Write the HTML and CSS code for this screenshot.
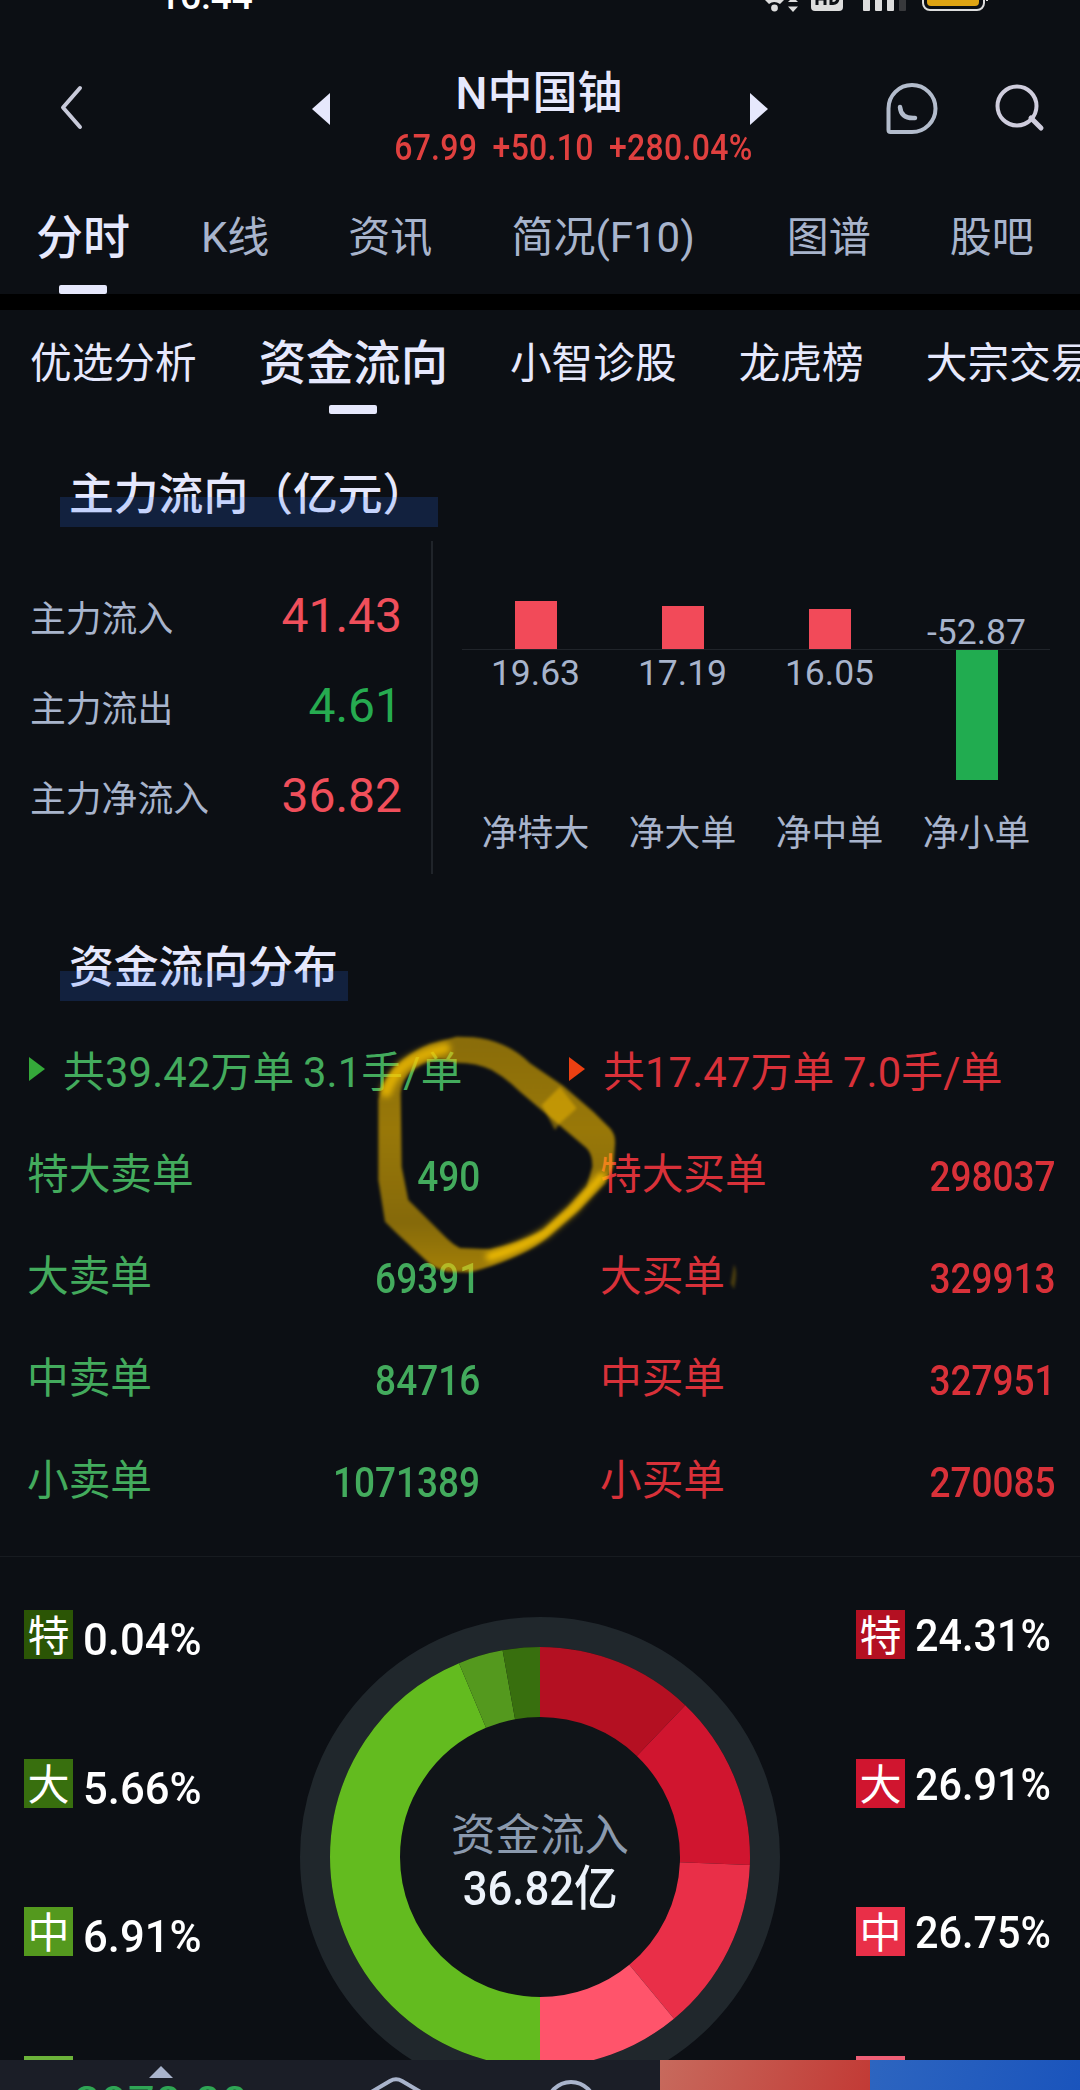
FILE: index.html
```html
<!DOCTYPE html>
<html lang="zh-CN">
<head>
    <meta charset="UTF-8">
    <meta name="viewport" content="width=device-width, initial-scale=1.0">
    <title>N中国铀 - 资金流向</title>
    <link rel="stylesheet" href="styles.css">
</head>
<body>
    <div class="app">
        <div class="status-bar">
            <span class="clock">16:44</span>
            <svg class="status-icons" width="230" height="14" viewBox="0 0 230 14">
                <path d="M5 0 Q14 -6 24 0 L20 4 Q14 0 9 4 Z" fill="#ddd"/>
                <circle cx="14.5" cy="8" r="3.4" fill="#ddd"/>
                <path d="M28 2 h10 L33 -3 Z M28 6.500 h10 L33 12 Z" fill="#ddd"/>
                <rect x="51" y="-16" width="32" height="27" rx="4" fill="#ddd"/>
                <path d="M57 -8 V5 M65 -8 V5 M57 -1 H65 M71 -8 V3.500 H73 Q78 3 78 -2" stroke="#0c0f14" stroke-width="3" fill="none"/>
                <rect x="103" y="-10" width="7" height="21" rx="1" fill="#ddd"/>
                <rect x="115" y="-10" width="7" height="21" rx="1" fill="#ddd"/>
                <rect x="127" y="-10" width="7" height="21" rx="1" fill="#ddd"/>
                <rect x="139" y="-10" width="7" height="21" rx="1" fill="#38393c"/>
                <rect x="163" y="-20" width="61" height="30" rx="7" fill="none" stroke="#ddd" stroke-width="2"/>
                <rect x="167" y="-16" width="52" height="22" rx="4" fill="#dfa413"/>
                <rect x="226" y="-4" width="2" height="5" fill="#ddd"/>
            </svg>
        </div>

        <header class="header">
            <svg class="back" width="24" height="46" viewBox="0 0 24 46">
                <path d="M20 3 L3 22.500 L20 42" fill="none" stroke="#c8cada" stroke-width="4" stroke-linecap="round" stroke-linejoin="round"/>
            </svg>
            <span class="tri tri-left"></span>
            <div class="stock">
                <div class="stock-name">N中国铀</div>
                <div class="stock-quote"><span class="squeeze">67.99 +50.10 +280.04%</span></div>
            </div>
            <span class="tri tri-right"></span>
            <svg class="chat" width="54" height="54" viewBox="0 0 54 54">
                <path d="M27 3 A23.500 23.500 0 1 1 27 50 H5.500 Q3.500 50 3.500 48 V26.500 A23.500 23.500 0 0 1 27 3 Z" fill="none" stroke="#b3bccc" stroke-width="4"/>
                <path d="M15 25 Q16 37 30 36" fill="none" stroke="#b3bccc" stroke-width="4.500" stroke-linecap="round"/>
            </svg>
            <svg class="search" width="52" height="50" viewBox="0 0 52 50">
                <circle cx="23" cy="23" r="19.500" fill="none" stroke="#cfcddd" stroke-width="4"/>
                <path d="M37 35 L47 45" stroke="#cfcddd" stroke-width="5" stroke-linecap="round"/>
            </svg>
        </header>

        <nav class="tabs">
            <span class="tab active">分时</span>
            <span class="tab">K线</span>
            <span class="tab">资讯</span>
            <span class="tab tab-wide">简况(F10)</span>
            <span class="tab">图谱</span>
            <span class="tab">股吧</span>
        </nav>

        <nav class="subtabs">
            <span class="subtab">优选分析</span>
            <span class="subtab active">资金流向</span>
            <span class="subtab">小智诊股</span>
            <span class="subtab">龙虎榜</span>
            <span class="subtab">大宗交易</span>
        </nav>

        <section class="main-flow">
            <h2 class="title title-main">主力流向（亿元）</h2>
            <div class="flow">
                <div class="flow-list">
                    <div class="flow-row"><span>主力流入</span><b class="up">41.43</b></div>
                    <div class="flow-row"><span>主力流出</span><b class="down">4.61</b></div>
                    <div class="flow-row"><span>主力净流入</span><b class="up">36.82</b></div>
                </div>
                <div class="chart">
                    <div class="col">
                        <div class="above"><i class="bar bar-up" style="height:48px"></i></div>
                        <div class="below"><span class="val">19.63</span></div>
                        <span class="name">净特大</span>
                    </div>
                    <div class="col">
                        <div class="above"><i class="bar bar-up" style="height:43px"></i></div>
                        <div class="below"><span class="val">17.19</span></div>
                        <span class="name">净大单</span>
                    </div>
                    <div class="col">
                        <div class="above"><i class="bar bar-up" style="height:40px"></i></div>
                        <div class="below"><span class="val">16.05</span></div>
                        <span class="name">净中单</span>
                    </div>
                    <div class="col">
                        <div class="above"><span class="val">-52.87</span></div>
                        <div class="below"><i class="bar bar-down" style="height:130px"></i></div>
                        <span class="name">净小单</span>
                    </div>
                </div>
            </div>
        </section>

        <section class="distribution">
            <h2 class="title title-dist">资金流向分布</h2>
            <div class="orders">
                <div class="sell">
                    <div class="summary"><i class="mark"></i>共39.42万单 3.1手/单</div>
                    <div class="order"><span>特大卖单</span><b class="squeeze">490</b></div>
                    <div class="order"><span>大卖单</span><b class="squeeze">69391</b></div>
                    <div class="order"><span>中卖单</span><b class="squeeze">84716</b></div>
                    <div class="order"><span>小卖单</span><b class="squeeze">1071389</b></div>
                </div>
                <div class="buy">
                    <div class="summary"><i class="mark"></i>共17.47万单 7.0手/单</div>
                    <div class="order"><span>特大买单</span><b class="squeeze">298037</b></div>
                    <div class="order"><span>大买单</span><b class="squeeze">329913</b></div>
                    <div class="order"><span>中买单</span><b class="squeeze">327951</b></div>
                    <div class="order"><span>小买单</span><b class="squeeze">270085</b></div>
                </div>
            </div>
            <!-- hand-drawn marker circle -->
            <svg class="marker" width="380" height="270" viewBox="0 0 1140 810">
                <defs>
                    <filter id="soft"><feGaussianBlur stdDeviation="4"/></filter>
                    <filter id="softer" x="-20%" y="-20%" width="140%" height="140%"><feGaussianBlur stdDeviation="9"/></filter>
                    <linearGradient id="ink" gradientUnits="userSpaceOnUse" x1="0" y1="0" x2="0" y2="810">
                        <stop offset="0.1" stop-color="#ffc400" stop-opacity="0.52"/>
                        <stop offset="0.4" stop-color="#ffc400" stop-opacity="0.58"/>
                        <stop offset="0.75" stop-color="#ffc400" stop-opacity="0.5"/>
                        <stop offset="0.9" stop-color="#ffc400" stop-opacity="0.6"/>
                    </linearGradient>
                </defs>
                <g filter="url(#soft)">
                    <path fill="url(#ink)" fill-rule="evenodd" d="M290 50 L340 52 Q385 56 430 75 Q475 95 510 130 L610 198 L700 275 L750 325 Q768 345 765 375 L760 440 L735 490 L660 567 L570 645 Q530 680 480 703 Q400 740 330 757 L260 755 Q225 745 210 733 L110 640 L75 605 L55 480 L55 240 Q65 190 100 145 Q150 95 210 72 Z M290 128 Q350 128 395 150 Q440 175 480 215 L580 300 L680 385 Q698 405 697 440 L680 500 L620 565 L550 630 Q490 665 390 688 L300 684 Q280 675 260 655 L145 540 L125 440 L122 220 Q125 175 165 145 Q200 120 240 118 Z"/>
                    <path d="M600 200 L650 265 L600 310 L585 330 L545 255 Z" fill="#ffc400" fill-opacity="0.42"/>
                    <path d="M1122 733 Q1135 757 1122 808 L1112 790 Z" fill="#ffc400" fill-opacity="0.25"/>
                </g>
                <g filter="url(#softer)" fill="none" stroke="#ffc800" stroke-linecap="round">
                    <path d="M78 215 Q95 170 130 138 Q175 105 255 85" stroke-width="34" stroke-opacity="0.7"/>
                    <path d="M725 470 Q690 510 640 567 L555 640 Q480 685 390 710" stroke-width="26" stroke-opacity="0.85"/>
                </g>
            </svg>
        </section>

        <section class="share">
            <div class="legend legend-sell">
                <div class="item"><i class="s1">特</i><span>0.04%</span></div>
                <div class="item"><i class="s2">大</i><span>5.66%</span></div>
                <div class="item"><i class="s3">中</i><span>6.91%</span></div>
                <div class="item"><i class="s4"></i></div>
            </div>
            <div class="donut">
                <svg width="480" height="480" viewBox="0 0 480 480">
                    <circle cx="240" cy="240" r="225" fill="#101418" stroke="#20272c" stroke-width="30"/>
                    <!-- each half of the ring adds up to 100 -->
                    <g fill="none" stroke-width="70" transform="rotate(-90 240 240)">
                        <circle cx="240" cy="240" r="175" pathLength="200" stroke="#b41022" stroke-dasharray="24.31 200"/>
                        <circle cx="240" cy="240" r="175" pathLength="200" stroke="#d0152f" stroke-dasharray="26.91 200" stroke-dashoffset="-24.31"/>
                        <circle cx="240" cy="240" r="175" pathLength="200" stroke="#e92f48" stroke-dasharray="26.75 200" stroke-dashoffset="-51.22"/>
                        <circle cx="240" cy="240" r="175" pathLength="200" stroke="#ff546b" stroke-dasharray="22.03 200" stroke-dashoffset="-77.97"/>
                        <circle cx="240" cy="240" r="175" pathLength="200" stroke="#63bb1f" stroke-dasharray="87.39 200" stroke-dashoffset="-100"/>
                        <circle cx="240" cy="240" r="175" pathLength="200" stroke="#54991e" stroke-dasharray="6.91 200" stroke-dashoffset="-187.39"/>
                        <circle cx="240" cy="240" r="175" pathLength="200" stroke="#386f0e" stroke-dasharray="5.7 200" stroke-dashoffset="-194.3"/>
                    </g>
                </svg>
                <div class="donut-text">
                    <div class="donut-label">资金流入</div>
                    <div class="donut-value"><span class="squeeze">36.82亿</span></div>
                </div>
            </div>
            <div class="legend legend-buy">
                <div class="item"><i class="b1">特</i><span>24.31%</span></div>
                <div class="item"><i class="b2">大</i><span>26.91%</span></div>
                <div class="item"><i class="b3">中</i><span>26.75%</span></div>
                <div class="item"><i class="b4"></i></div>
            </div>
        </section>

        <footer class="bottom-bar">
            <div class="index"><i class="tri-up"></i><span>3970.00</span></div>
            <div class="tool">
                <svg width="60" height="30" viewBox="0 0 60 30">
                    <path d="M2 34 L24 21 Q30 17.500 36 21 L58 34" fill="none" stroke="#a9b4cc" stroke-width="4"/>
                </svg>
            </div>
            <div class="tool">
                <svg width="60" height="30" viewBox="0 0 60 30">
                    <circle cx="29" cy="46" r="24" fill="none" stroke="#a9b4cc" stroke-width="4"/>
                </svg>
            </div>
            <div class="btn btn-buy"></div>
            <div class="btn btn-sell"></div>
        </footer>
    </div>
</body>
</html>
```

FILE: styles.css
```css
* {
    box-sizing: border-box;
}
body {
    margin: 0;
    background-color: #0c0f14;
    color: #e6e8fc;
    font-family: Roboto, "Noto Sans CJK SC", sans-serif;
    font-size: 42px;
}
.app {
    width: 1080px;
    height: 2090px;
    overflow: hidden;
    display: flex;
    flex-direction: column;
}
.app > * {
    flex: none;
}
i, b {
    font-style: normal;
    font-weight: 400;
}
.squeeze {
    display: inline-block;
    transform: scaleX(0.86);
}

/* status bar */
.status-bar {
    height: 14px;
    padding: 0 90px 0 159px;
    display: flex;
    justify-content: space-between;
    overflow: hidden;
    color: #fff;
}
.clock {
    font-size: 37px;
    font-weight: 500;
    line-height: 40px;
    margin-top: -23px;
}

/* header */
.header {
    height: 178px;
    display: flex;
    padding-left: 60px;
}
.back {
    margin-top: 71px;
}
.tri {
    width: 0;
    height: 0;
    margin-top: 79px;
    border-top: 16px solid transparent;
    border-bottom: 16px solid transparent;
}
.tri-left {
    margin-left: 228px;
    border-right: 18px solid #e6e8fc;
}
.tri-right {
    border-left: 18px solid #e6e8fc;
}
.stock {
    width: 420px;
    text-align: center;
    padding-top: 53px;
    white-space: nowrap;
}
.stock-name {
    font-size: 45px;
    font-weight: 500;
    line-height: 54px;
    padding-right: 2px;
}
.stock-quote {
    font-size: 36px;
    line-height: 40px;
    margin-top: 7px;
    padding-left: 66px;
    color: #e0403f;
    font-weight: 500;
}
.stock-quote .squeeze {
    margin: 0 -40px;
    word-spacing: 8px;
    letter-spacing: 0.3px;
    transform: scaleX(0.89);
}
.chat {
    margin: 68px 0 0 117px;
}
.search {
    margin: 69px 0 0 55px;
}

/* top tabs */
.tabs {
    height: 118px;
    display: flex;
    padding: 14px 0 0 36px;
    border-bottom: 16px solid #000;
    line-height: 64px;
    color: #a8b4cc;
    white-space: nowrap;
}
.tab {
    margin-right: 79px;
}
.tab-wide {
    margin-right: 92px;
}
.tab.active {
    width: 96px;
    margin-right: 71px;
    font-size: 47px;
    font-weight: 500;
    color: #e6e8fc;
}
.tab.active::after,
.subtab.active::after {
    content: "";
    display: block;
    width: 48px;
    height: 9px;
    margin: 15px auto 0;
    border-radius: 2px;
    background-color: #e6e8fc;
}

/* second level tabs */
.subtabs {
    height: 118px;
    display: flex;
    padding: 22px 0 0 30px;
    line-height: 64px;
    font-size: 41.7px;
    white-space: nowrap;
}
.subtab {
    margin-right: 62px;
}
.subtab.active {
    font-size: 47.3px;
    font-weight: 500;
}
.subtab.active::after {
    margin-top: 9px;
}

/* section titles with the blue underlay */
.title {
    position: relative;
    margin: 0 0 0 60px;
    padding-left: 9px;
    font-size: 44.8px;
    font-weight: 500;
    line-height: 60px;
    white-space: nowrap;
}
.title::after {
    content: "";
    position: absolute;
    left: 0;
    bottom: 0;
    width: 100%;
    height: 30px;
    background-color: rgba(50, 115, 255, 0.18);
}
.title-main {
    width: 378px;
    padding-bottom: 4px;
    line-height: 56px;
}
.title-dist {
    width: 288px;
    padding-bottom: 3px;
}

/* main flow */
.main-flow {
    height: 510px;
    padding-top: 39px;
}
.flow {
    display: flex;
    margin-top: 14px;
}
.flow-list {
    width: 433px;
    height: 333px;
    padding: 34px 29px 0 30px;
    border-right: 2px solid #20242a;
}
.flow-row {
    height: 90px;
    display: flex;
    justify-content: space-between;
    line-height: 90px;
    font-size: 35.8px;
    color: #a8b4cc;
}
.flow-row b {
    font-size: 48px;
    line-height: 81px;
}
.flow-row .up {
    color: #f04f5b;
}
.flow-row .down {
    color: #26ab50;
}
.chart {
    width: 588px;
    margin-left: 29px;
    display: flex;
    color: #a8b4cc;
}
.col {
    width: 147px;
    text-align: center;
}
.above {
    height: 109px;
    display: flex;
    align-items: flex-end;
    justify-content: center;
    border-bottom: 1px solid #20242a;
}
.below {
    height: 158px;
    display: flex;
    align-items: flex-start;
    justify-content: center;
}
.bar {
    width: 42px;
}
.bar-up {
    background-color: #f24a59;
}
.bar-down {
    background-color: #21ac50;
}
.val {
    font-size: 35.5px;
    line-height: 34px;
    padding-top: 6px;
}
.above .val {
    padding: 0;
}
.name {
    display: block;
    font-size: 35.8px;
    line-height: 52px;
}

/* distribution */
.distribution {
    position: relative;
    height: 619px;
    border-bottom: 1px solid #171b20;
}
.orders {
    display: flex;
    margin-top: 31px;
}
.sell, .buy {
    width: 540px;
    font-size: 41.7px;
    white-space: nowrap;
}
.sell {
    color: #43ab5d;
    padding: 0 60px 0 27px;
}
.buy {
    color: #d93139;
    padding: 0 24px 0 60px;
}
.summary {
    display: flex;
    align-items: center;
    height: 74px;
    letter-spacing: 0.2px;
    word-spacing: -2px;
}
.buy .summary {
    margin-left: -33px;
}
.mark {
    margin: 0 18px 0 2px;
    border-left: 16px solid #35a93a;
    border-top: 12px solid transparent;
    border-bottom: 12px solid transparent;
}
.buy .mark {
    border-left-color: #ec4012;
}
.order {
    height: 102px;
    display: flex;
    justify-content: space-between;
    align-items: center;
}
.order:nth-child(2) {
    margin-top: 14px;
}
.order b {
    font-size: 43px;
    font-weight: 500;
    padding-top: 10px;
    transform-origin: right;
}
.marker {
    position: absolute;
    left: 360px;
    top: 82px;
}

/* share of orders */
.share {
    height: 503px;
    display: flex;
    overflow: hidden;
    color: #fff;
}
.legend {
    width: 300px;
    padding: 53px 0 0 24px;
}
.legend-buy {
    padding-left: 76px;
}
.item {
    height: 148.6px;
    display: flex;
    align-items: flex-start;
    line-height: 60px;
    font-size: 45px;
    font-weight: 500;
}
.item i {
    width: 49px;
    height: 49px;
    margin-right: 10px;
    text-align: center;
    font-size: 42px;
    line-height: 54px;
}
.item span {
    transform: scaleX(0.97);
    transform-origin: left;
}
.legend-buy .item {
    font-size: 43.5px;
    line-height: 54px;
}
.legend-buy .item span {
    transform: scaleX(0.95);
}
.s1 { background-color: #2b5505; }
.s2 { background-color: #386f0e; }
.s3 { background-color: #54991e; }
.s4 { background-color: #6cb33a; }
.b1 { background-color: #b41022; }
.b2 { background-color: #d0152f; }
.b3 { background-color: #e92f48; }
.b4 { background-color: #ef5f76; }
.donut {
    position: relative;
    width: 480px;
    padding-top: 60px;
}
.donut-text {
    position: absolute;
    left: 0;
    top: 250px;
    width: 100%;
    text-align: center;
}
.donut-label {
    font-size: 44.5px;
    line-height: 58px;
    color: #8b9aae;
}
.donut-value {
    font-size: 48px;
    font-weight: 500;
    line-height: 48px;
    color: #edf3fb;
}
.donut-value .squeeze {
    transform: scaleX(0.91);
}

/* bottom bar */
.bottom-bar {
    height: 30px;
    display: flex;
    overflow: hidden;
    background-color: #1b1e27;
}
.index {
    width: 308px;
    padding-left: 14px;
    display: flex;
    flex-direction: column;
    align-items: center;
    color: #2fa555;
    font-size: 48px;
    line-height: 56px;
}
.tri-up {
    border-bottom: 12px solid #a9b4cc;
    border-left: 12px solid transparent;
    border-right: 12px solid transparent;
    margin-top: 6px;
}
.index span {
    margin-top: -2px;
}
.tool {
    width: 176px;
}
.tool svg {
    display: block;
    margin: 0 auto;
}
.btn {
    width: 210px;
}
.btn-buy {
    background: linear-gradient(110deg, #c76a5d, #c23a35);
}
.btn-sell {
    background: linear-gradient(110deg, #2d65c0, #1a54bc);
}
```
